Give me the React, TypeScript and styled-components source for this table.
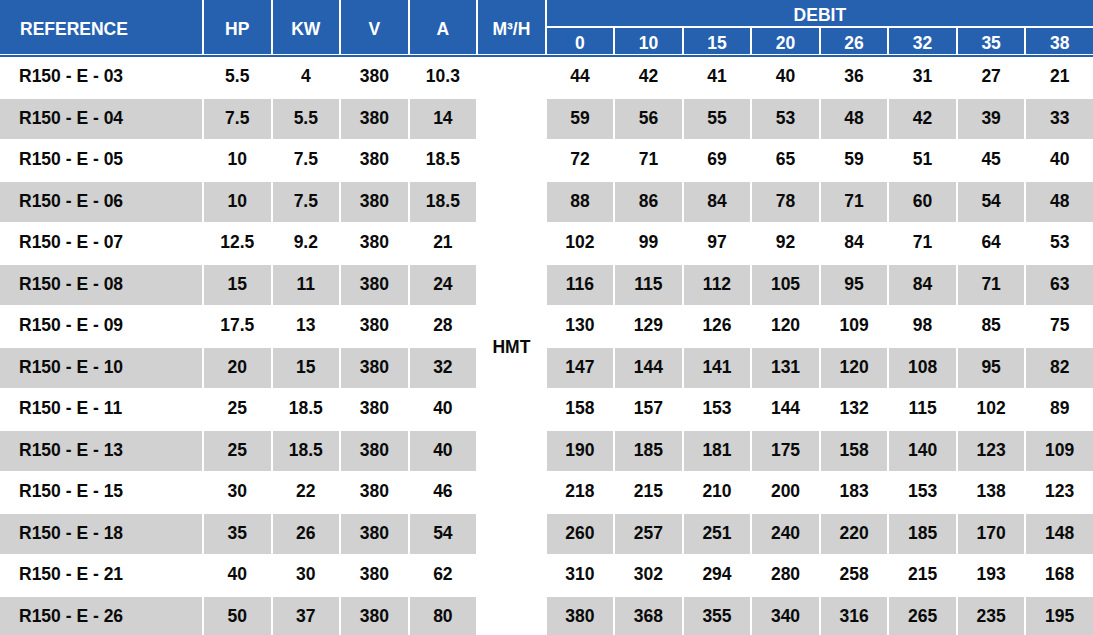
import React from 'react';
import styled, { createGlobalStyle } from 'styled-components';

const GlobalStyle = createGlobalStyle`
  html, body {
    margin: 0;
    padding: 0;
    background: #fff;
  }
  body {
    font-family: "Liberation Sans", Arial, sans-serif;
    overflow: hidden;
  }
`;

const BLUE = '#2661b0';
const GREY = '#d0d1d0';

// clips the outer white border of the cells
const Frame = styled.div`
  width: 1093px;
  height: 635px;
  overflow: hidden;
`;

const Table = styled.table`
  margin: -1px 0 0 -1px;
  width: 1095px;
  table-layout: fixed;
  border-collapse: separate;
  border-spacing: 0;
  font-family: "Liberation Sans", Arial, sans-serif;
  font-size: 17.5px;
  font-weight: 700;
`;

const HeadRow = styled.tr`
  height: 28px;
`;

const HeadCell = styled.th<{ $align?: 'left' | 'center' }>`
  background: ${BLUE};
  color: #fff;
  border: 1px solid #fff;
  padding: ${(p) => (p.$align === 'left' ? '5px 0 0 20px' : '5px 0 0')};
  text-align: ${(p) => p.$align ?? 'center'};
  vertical-align: middle;
  font-weight: 700;
  white-space: nowrap;
`;

const DividerRow = styled.tr`
  height: 1.5px;
`;

const Divider = styled.td`
  background: ${BLUE};
  padding: 0;
  border: 0;
  height: 1.5px;
  font-size: 0;
  line-height: 0;
`;

const BodyRow = styled.tr`
  height: 41.5px;
`;

const Cell = styled.td<{ $shaded: boolean; $align?: 'left' | 'center' }>`
  background: ${(p) => (p.$shaded ? GREY : '#fff')};
  color: #0a0a0a;
  border: 1px solid #fff;
  padding: ${(p) => (p.$align === 'left' ? '0 0 1px 19px' : '0 0 1px')};
  text-align: ${(p) => p.$align ?? 'center'};
  vertical-align: middle;
  white-space: nowrap;
`;

const HmtCell = styled.td`
  background: #fff;
  color: #0a0a0a;
  border: 1px solid #fff;
  padding: 0;
  text-align: center;
  vertical-align: middle;
`;

const flows = ['0', '10', '15', '20', '26', '32', '35', '38'];

type Pump = {
  ref: string;
  hp: string;
  kw: string;
  v: string;
  a: string;
  hmt: number[];
};

const pumps: Pump[] = [
  { ref: '03', hp: '5.5', kw: '4', v: '380', a: '10.3', hmt: [44, 42, 41, 40, 36, 31, 27, 21] },
  { ref: '04', hp: '7.5', kw: '5.5', v: '380', a: '14', hmt: [59, 56, 55, 53, 48, 42, 39, 33] },
  { ref: '05', hp: '10', kw: '7.5', v: '380', a: '18.5', hmt: [72, 71, 69, 65, 59, 51, 45, 40] },
  { ref: '06', hp: '10', kw: '7.5', v: '380', a: '18.5', hmt: [88, 86, 84, 78, 71, 60, 54, 48] },
  { ref: '07', hp: '12.5', kw: '9.2', v: '380', a: '21', hmt: [102, 99, 97, 92, 84, 71, 64, 53] },
  { ref: '08', hp: '15', kw: '11', v: '380', a: '24', hmt: [116, 115, 112, 105, 95, 84, 71, 63] },
  { ref: '09', hp: '17.5', kw: '13', v: '380', a: '28', hmt: [130, 129, 126, 120, 109, 98, 85, 75] },
  { ref: '10', hp: '20', kw: '15', v: '380', a: '32', hmt: [147, 144, 141, 131, 120, 108, 95, 82] },
  { ref: '11', hp: '25', kw: '18.5', v: '380', a: '40', hmt: [158, 157, 153, 144, 132, 115, 102, 89] },
  { ref: '13', hp: '25', kw: '18.5', v: '380', a: '40', hmt: [190, 185, 181, 175, 158, 140, 123, 109] },
  { ref: '15', hp: '30', kw: '22', v: '380', a: '46', hmt: [218, 215, 210, 200, 183, 153, 138, 123] },
  { ref: '18', hp: '35', kw: '26', v: '380', a: '54', hmt: [260, 257, 251, 240, 220, 185, 170, 148] },
  { ref: '21', hp: '40', kw: '30', v: '380', a: '62', hmt: [310, 302, 294, 280, 258, 215, 193, 168] },
  { ref: '26', hp: '50', kw: '37', v: '380', a: '80', hmt: [380, 368, 355, 340, 316, 265, 235, 195] },
];

export default function App() {
  return (
    <>
      <GlobalStyle />
      <Frame>
        <Table>
          <colgroup>
            <col style={{ width: 204 }} />
            {Array.from({ length: 13 }).map((_, i) => (
              <col key={i} />
            ))}
          </colgroup>
          <thead>
            <HeadRow>
              <HeadCell rowSpan={2} $align="left">REFERENCE</HeadCell>
              <HeadCell rowSpan={2}>HP</HeadCell>
              <HeadCell rowSpan={2}>KW</HeadCell>
              <HeadCell rowSpan={2}>V</HeadCell>
              <HeadCell rowSpan={2}>A</HeadCell>
              <HeadCell rowSpan={2}>M³/H</HeadCell>
              <HeadCell colSpan={8}>DEBIT</HeadCell>
            </HeadRow>
            <HeadRow>
              {flows.map((f) => (
                <HeadCell key={f}>{f}</HeadCell>
              ))}
            </HeadRow>
            <DividerRow>
              <Divider colSpan={14} />
            </DividerRow>
          </thead>
          <tbody>
            {pumps.map((p, i) => {
              const shaded = i % 2 === 1;
              return (
                <BodyRow key={p.ref}>
                  <Cell $shaded={shaded} $align="left">R150 - E - {p.ref}</Cell>
                  <Cell $shaded={shaded}>{p.hp}</Cell>
                  <Cell $shaded={shaded}>{p.kw}</Cell>
                  <Cell $shaded={shaded}>{p.v}</Cell>
                  <Cell $shaded={shaded}>{p.a}</Cell>
                  {i === 0 && <HmtCell rowSpan={pumps.length}>HMT</HmtCell>}
                  {p.hmt.map((h, j) => (
                    <Cell key={j} $shaded={shaded}>{h}</Cell>
                  ))}
                </BodyRow>
              );
            })}
          </tbody>
        </Table>
      </Frame>
    </>
  );
}
